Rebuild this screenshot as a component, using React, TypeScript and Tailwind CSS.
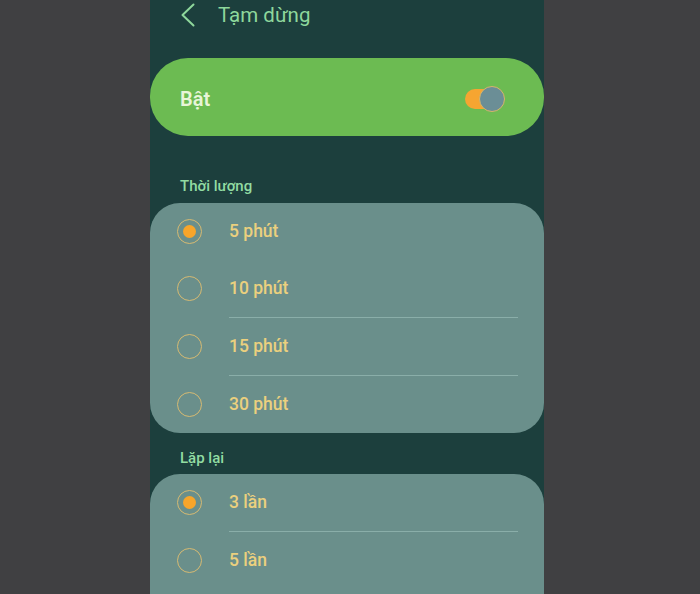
import React from "react";

type Opt = { label: string; selected?: boolean; sepBefore?: boolean };

const durations: Opt[] = [
  { label: "5 phút", selected: true },
  { label: "10 phút" },
  { label: "15 phút", sepBefore: true },
  { label: "30 phút", sepBefore: true },
];

const repeats: Opt[] = [
  { label: "3 lần", selected: true },
  { label: "5 lần", sepBefore: true },
];

function Radio({ selected }: { selected?: boolean }) {
  return (
    <div className="w-[25px] h-[25px] rounded-full border-[1.5px] border-[#d6ba72] flex items-center justify-center shrink-0">
      {selected && <div className="w-[13px] h-[13px] rounded-full bg-[#f7a52a]" />}
    </div>
  );
}

function OptionList({ items, extra }: { items: Opt[]; extra?: boolean }) {
  return (
    <div className="bg-[#6a8f8b] rounded-[30px] flex flex-col">
      {items.map((o) => (
        <React.Fragment key={o.label}>
          {o.sepBefore && <div className="h-px bg-[#8aaea9] ml-[79px] mr-[26px]" />}
          <div className="h-[57px] flex items-center pl-[27px]">
            <Radio selected={o.selected} />
            <span className="ml-[27px] text-[17.5px] font-medium text-[#ebd07e]">{o.label}</span>
          </div>
        </React.Fragment>
      ))}
      {extra && <div className="h-[40px]" />}
    </div>
  );
}

export default function App() {
  return (
    <div
      className="w-[700px] h-[594px] bg-[#404042] overflow-hidden"
      style={{ fontFamily: "Roboto, 'Noto Sans', sans-serif" }}
    >
      <div className="ml-[150px] w-[394px] h-[594px] bg-[#1c3f3d] overflow-hidden flex flex-col">
        <div className="h-[30px] flex items-center pl-[31px] shrink-0">
          <svg width="14" height="24" viewBox="0 0 14 24" fill="none">
            <polyline points="12.5,1.5 1.5,12 12.5,22.5" stroke="#8ed79c" strokeWidth="2" strokeLinecap="round" strokeLinejoin="round" />
          </svg>
          <span className="ml-[23px] text-[20.5px] leading-[24px] text-[#8ed79c]">Tạm dừng</span>
        </div>

        <div className="mt-[28px] h-[78px] rounded-[38px] bg-[#6cbb52] flex items-center justify-between pl-[30px] pr-[39px] pt-[3px] shrink-0">
          <span className="text-[20px] font-semibold text-[#e8f5d8]">Bật</span>
          <div className="relative w-[40px] h-[26px]">
            <div className="absolute left-0 top-[3px] w-[34px] h-[20px] rounded-full bg-[#f6a531]" />
            <div className="absolute right-0 top-0 w-[26px] h-[26px] rounded-full bg-[#6b8e96] border-[1.5px] border-[#d8b56a]" />
          </div>
        </div>

        <div className="mt-[40px] h-[20px] leading-[20px] pl-[30px] text-[15px] font-medium text-[#92dca2] shrink-0">
          Thời lượng
        </div>
        <div className="mt-[7px] shrink-0">
          <OptionList items={durations} />
        </div>

        <div className="mt-[15px] h-[20px] leading-[20px] pl-[30px] text-[15px] font-medium text-[#92dca2] shrink-0">
          Lặp lại
        </div>
        <div className="mt-[6px] shrink-0">
          <OptionList items={repeats} extra />
        </div>
      </div>
    </div>
  );
}
